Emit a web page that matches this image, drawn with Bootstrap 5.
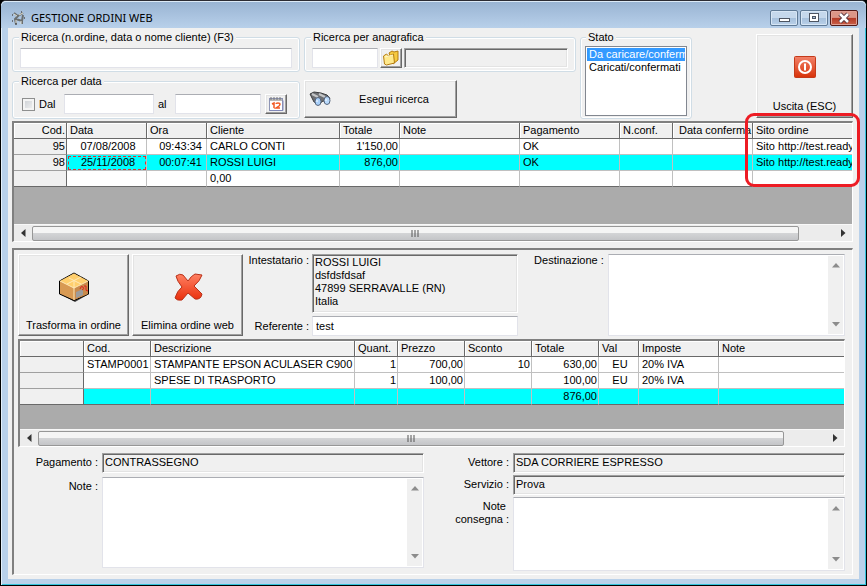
<!DOCTYPE html>
<html lang="it">
<head>
<meta charset="utf-8">
<meta name="viewport" content="width=device-width, initial-scale=1">
<title>GESTIONE ORDINI WEB</title>
<link href="https://cdn.jsdelivr.net/npm/bootstrap@5.3.0/dist/css/bootstrap.min.css" rel="stylesheet">
<style>
:root{--face:#f0f0f0;--dark:#696969;--mid:#a0a0a0}
body{font:11px/13px "Liberation Sans",Arial,sans-serif;color:#000;background:#000}
input,button,select,textarea{font:inherit;color:inherit;border-radius:0}
.app-window{min-height:100vh;background:#b9d1ea;border:1px solid #000;border-top:1px solid #2b2b33;border-radius:6px 6px 0 0;box-shadow:inset 1px 1px #e4f0fa,inset -1px -1px #35c4dc}
.title-bar{height:27px;padding:2px 8px 0 10px;background:linear-gradient(#98b3d2,#b8d0ea);border-radius:5px 5px 0 0;box-shadow:inset 0 1px #dceaf7}
.title-text{font:11px/16px "Noto Sans","Open Sans",sans-serif}
.win-btn{width:28px;height:16px;padding:0;border:1px solid #5f7a96;border-radius:2px;background:linear-gradient(#c5d8ec 48%,#a5bfdb 50%,#bad1e9);box-shadow:inset 0 0 0 1px #d7e6f5;line-height:0}
.win-close{border-color:#541b18;background:linear-gradient(#dc9687 46%,#b43a25 50%,#c9604a);box-shadow:inset 0 0 0 1px #e0a094}
.win-body{background:var(--face);margin:0 7px 6px 7px;padding:3px 6px 4px 4px}
.top-area{gap:4px;margin-bottom:2px}
.search-grid{display:grid;grid-template-columns:289fr 273fr;column-gap:4px;row-gap:3px}
.group{border:1px solid #d0dde6;border-radius:3px;padding:4px 7px 3px;box-shadow:inset 0 0 0 1px #fff;min-width:0}
.group legend{float:none;width:auto;font:inherit;margin:0 0 0 -1px;padding:0 2px;background:var(--face);height:13px}
.group-dates{padding:6px 12px 4px 9px}
.group-dates legend{margin-left:-3px}
.text-in{border:1px solid #e2e3ea;border-top-color:#abadb3;background:#fff;padding:0 3px;height:20px;min-width:0;outline-offset:-1px}
.sunken{border:1px solid;border-color:var(--mid) #fff #fff var(--mid);box-shadow:inset 1px 1px var(--dark),inset -1px -1px #e3e3e3;background:var(--face);padding:0 2px 2px;height:20px;min-width:0;outline:0}
.raised{background:var(--face);border:1px solid;border-color:#fff var(--dark) var(--dark) #fff;box-shadow:inset -1px -1px var(--mid),inset 1px 1px #e3e3e3;padding:0}
.mini{width:22px;height:20px;line-height:0}
.date-check{appearance:none;width:13px;height:13px;border:1px solid #8e8f8f;background:linear-gradient(135deg,#c9cdd2,#f4f4f4);box-shadow:inset 0 0 0 2px #f4f4f4;margin:0}
.run-btn{width:153px;height:38px;margin-top:5px}
.state-box{width:112px;margin-right:60px;padding:2px 4px}
.state-box legend{margin-left:1px}
.state-list{width:102px;height:70px;border:1px solid #828790;background:#fff;padding:1px;overflow:hidden;outline:0;display:block}
.state-list option{padding:0 0 0 2px;min-height:13px;line-height:13px}
.state-list option:checked{background:#39f linear-gradient(#39f,#39f);-webkit-text-fill-color:#fff}
.exit-btn{width:97px;height:84px;margin-top:3px;padding:20px 0 0}
.exit-text{margin-top:21px;line-height:13px}
.data-frame{border:solid;border-width:2px 1px 1px 2px;border-color:#808080 #fff #fff #808080;background:#ababab}
.data-clip{overflow:hidden}
.data-grid{table-layout:fixed;border-collapse:separate;border-spacing:0;margin:0;color:#000}
.data-grid>:not(caption)>*>*{padding:0 0 0 3px;height:16px;line-height:15px;border:solid #c0c0c0;border-width:0 1px 1px 0;white-space:nowrap;overflow:hidden;font-weight:400;box-shadow:none;background:#fff;color:#000;text-align:left}
.data-grid>*>tr>:last-child{border-right-width:0}
.data-grid>thead>tr>th,.data-grid>tbody>tr>th{background:var(--face)}
.data-grid>thead>tr>th{border-right-color:var(--dark);border-bottom-color:var(--dark);box-shadow:inset 1px 1px #fff}
.data-grid>tbody>tr>th{border-right-color:var(--dark);border-bottom-color:var(--mid)}
.data-grid>tbody>tr:last-child>*{border-bottom-color:var(--dark)}
.data-grid>tbody>tr.picked>td{background:#0ff}
.data-grid>*>tr>.num{text-align:right;padding-right:1px}
.data-grid>*>tr>.mid{text-align:center}
.data-grid>*>tr>.focus-cell{outline:1px dashed #e03030;outline-offset:-2px}
.h-scroll{height:17px;background:#ececec;border-top:1px solid #f8f8f8}
.h-arrow{width:18px;line-height:0}
.thumb{height:15px;border:1px solid #979797;border-radius:2px;background:linear-gradient(#f5f5f5 45%,#d3d4d6 50%,#c4c5c8)}
.order-panel{border:solid;border-width:2px 1px 1px 2px;border-color:#808080 #fff #fff #808080;margin-top:6px;padding:4px 7px 3px 4px}
.action-btn{width:111px;height:82px;padding:0}
.action-btn svg{display:block;margin:12px auto 15px}
.memo{border:1px solid #e2e3ea;border-top-color:#abadb3;background:#fff;min-width:0}
.memo textarea{border:0;resize:none;outline:0;padding:2px;width:100%;background:transparent;overflow:hidden;min-height:0}
.v-scroll{width:15px;flex:none;background:#f0f0f0;padding:7px 0;margin:1px;line-height:0}
.addr{height:59px;padding:1px 2px}
.lbl{text-align:right;flex:none;white-space:nowrap;margin-right:4px}
.lbl-head{width:62px;margin-right:3px}
.lbl-foot{width:80px;padding-top:3px}
.callout-ring{position:absolute;top:-10px;right:-8px;width:115px;height:74px;border:3px solid #ed1c24;border-radius:9px;pointer-events:none}
.bottom-fields{gap:5px;margin-top:6px;height:118px}
.foot-left{flex:407 1 0;gap:4px;padding-bottom:3px}
.foot-right{flex:417 1 0;gap:2px}
</style>
<script src="https://cdn.jsdelivr.net/npm/bootstrap@5.3.0/dist/js/bootstrap.bundle.min.js"></script>
</head>
<body>
<div class="app-window d-flex flex-column">
  <header class="title-bar d-flex align-items-center">
    <svg width="16" height="16" viewBox="0 0 16 16" class="me-1 mt-1" fill="none" aria-hidden="true"><path d="M3 3l4 3-3 3 1 5M7 6l5-3M5 9l6 2v3M12 5l-1 6" stroke="#6b6f70" stroke-width="2"/><path d="M3 4l3 2M8 5l4-2M10 11v3M5 10v3" stroke="#e0e0d4"/><path d="M1 5h1M4 14h2M13 8h1M10 2h1M1 11h1" stroke="#555" stroke-width="1.500"/></svg>
    <h1 class="title-text mb-0 mt-1">GESTIONE ORDINI WEB</h1>
    <div class="ms-auto d-flex mt-1" style="gap:2px">
      <button class="win-btn" aria-label="Riduci"><svg width="14" height="12" viewBox="0 0 14 12"><rect x="2.500" y="6.500" width="10" height="3" fill="#fff" stroke="#4d5562"/></svg></button>
      <button class="win-btn" aria-label="Ingrandisci"><svg width="14" height="12" viewBox="0 0 14 12"><rect x="2.500" y="1.500" width="9" height="8" fill="#fff" stroke="#4d5562"/><rect x="5.500" y="4.500" width="3" height="2" fill="#a8c0da" stroke="#4d5562"/></svg></button>
      <button class="win-btn win-close" aria-label="Chiudi"><svg width="14" height="12" viewBox="0 0 14 12"><path d="M3 2l8 8M11 2l-8 8" stroke="#50303a" stroke-width="4.500"/><path d="M3 2l8 8M11 2l-8 8" stroke="#fff" stroke-width="2.500"/></svg></button>
    </div>
  </header>

  <main class="win-body d-flex flex-column flex-grow-1">
    <section class="top-area d-flex align-items-start">
      <div class="search-grid flex-grow-1">
        <fieldset class="group"><legend><label for="q">Ricerca (n.ordine, data o nome cliente) (F3)</label></legend>
          <div class="d-flex"><input id="q" class="text-in w-100" type="text"></div></fieldset>
        <fieldset class="group"><legend><label for="ana">Ricerca per anagrafica</label></legend>
          <div class="d-flex" style="gap:2px">
            <input id="ana" class="text-in" type="text" style="width:66px">
            <button class="raised mini" aria-label="Scegli anagrafica"><svg width="18" height="16" viewBox="0 0 18 16"><path d="M7 3l3-2 2 1 4-1v9l-5 4z" fill="#f6c93f" stroke="#b57d11"/><path d="M1.500 6l3-2 2 2 5-2 1 9-8 2-2-1z" fill="#ffe98c" stroke="#b57d11"/><path d="M3 7l8-2" stroke="#fff6c8"/></svg></button>
            <input class="sunken flex-grow-1" type="text" readonly aria-label="Nome anagrafica">
          </div></fieldset>
        <fieldset class="group group-dates"><legend>Ricerca per data</legend>
          <div class="d-flex align-items-center">
            <input id="dal" class="date-check" type="checkbox"><label for="dal" class="ms-1 me-2">Dal</label>
            <input class="text-in flex-grow-1" style="width:88px" type="text" aria-label="Data iniziale">
            <label for="al" class="ms-1 me-2">al</label>
            <input id="al" class="text-in flex-grow-1" style="width:84px" type="text">
            <button class="raised mini ms-1" aria-label="Calendario"><svg width="16" height="16" viewBox="0 0 16 16"><rect x="1.500" y="2.500" width="13" height="12" fill="#fff" stroke="#8d94b5"/><path d="M2 4h12M3 1v3M6 1v3M9 1v3M12 1v3" stroke="#777"/><path d="M2 14.500h13v-10" stroke="#8188b8" fill="none"/><path d="M4 8l2-1v5M8 8q0-1 2-1t2 1-1 2l-3 2h4" stroke="#f15a24" stroke-width="1.500" fill="none"/></svg></button>
          </div></fieldset>
        <button class="raised run-btn d-flex align-items-center">
          <svg class="ms-1" width="23" height="16" viewBox="0 0 23 16"><path d="M1 3l4-2 7 1 6 2 3 3-2 4-5-1-4 3-5-2z" fill="#6d6f72" stroke="#3c3e40"/><path d="M3 3l6 3M10 3l6 3" stroke="#c4c6c8" stroke-width="2"/><ellipse cx="9" cy="10.500" rx="3" ry="4" fill="#a9d0fa" stroke="#56657c"/><ellipse cx="18" cy="9.500" rx="3" ry="4" fill="#b9dafc" stroke="#56657c"/><path d="M8 9v2M17 8v2" stroke="#fff"/></svg>
          <span class="flex-grow-1">Esegui ricerca</span></button>
      </div>
      <fieldset class="group state-box"><legend><label for="stato">Stato</label></legend>
        <select id="stato" class="state-list" size="5"><option selected>Da caricare/confermare</option><option>Caricati/confermati</option></select></fieldset>
      <button class="raised exit-btn d-flex flex-column align-items-center"><svg width="24" height="24" viewBox="0 0 24 24"><defs><linearGradient id="pw" x2="0" y2="1"><stop stop-color="#f2826a"/><stop offset="1" stop-color="#d83208"/></linearGradient></defs><rect x="1.500" y="1.500" width="21" height="21" rx="1" fill="url(#pw)" stroke="#c43a1a"/><circle cx="12" cy="12" r="6" fill="none" stroke="#fff" stroke-width="2"/><path d="M12 8.500v7" stroke="#fff" stroke-width="2"/></svg><span class="exit-text">Uscita (ESC)</span></button>
    </section>

    <section class="data-frame position-relative">
      <div class="data-clip">
      <table class="table data-grid" aria-label="Ordini">
        <colgroup><col style="width:53px"><col style="width:80px"><col style="width:60px"><col style="width:133px"><col style="width:60px"><col style="width:120px"><col style="width:100px"><col style="width:53px"><col style="width:80px"><col></colgroup>
        <thead><tr><th class="num">Cod.</th><th>Data</th><th>Ora</th><th>Cliente</th><th>Totale</th><th>Note</th><th>Pagamento</th><th>N.conf.</th><th>&nbsp;Data conferma</th><th>Sito ordine</th></tr></thead>
        <tbody>
          <tr><th class="num">95</th><td class="mid">07/08/2008</td><td class="num">09:43:34&nbsp;</td><td>CARLO CONTI</td><td class="num">1'150,00</td><td></td><td>OK</td><td></td><td></td><td>Sito http://test.ready</td></tr>
          <tr class="picked"><th class="num">98</th><td class="mid focus-cell">25/11/2008</td><td class="num">00:07:41&nbsp;</td><td>ROSSI LUIGI</td><td class="num">876,00</td><td></td><td>OK</td><td></td><td></td><td>Sito http://test.ready</td></tr>
          <tr><th></th><td></td><td></td><td>0,00</td><td></td><td></td><td></td><td></td><td></td><td></td></tr>
        </tbody>
      </table></div>
      <div style="height:37px"></div>
      <div class="h-scroll d-flex align-items-center">
        <span class="h-arrow text-center"><svg width="5" height="8"><path d="M4.500 0v8L0 4z" fill="#333"/></svg></span>
        <div class="thumb d-flex justify-content-center align-items-center" style="flex:0 1 91.500%"><svg width="8" height="7"><path d="M1 0v7M4 0v7M7 0v7" stroke="#555"/></svg></div>
        <span class="h-arrow text-center ms-auto"><svg width="5" height="8"><path d="M0 0v8l4.500-4z" fill="#333"/></svg></span>
      </div>
      <div class="callout-ring"></div>
    </section>

    <section class="order-panel flex-grow-1 d-flex flex-column">
      <div class="d-flex align-items-start">
        <button class="raised action-btn"><svg width="34" height="34" viewBox="0 0 34 34"><path d="M3 24l15 8 14-8v-4H3z" fill="#444"/><path d="M2.500 11L17 3l14.500 8v13L17 30.500 2.500 24z" fill="#d89a53" stroke="#000"/><path d="M3 11l14-7.500L31 11l-14 7z" fill="#ffcf6d"/><path d="M17 18v12l14-6V11z" fill="#c98a4b"/><path d="M3 11l14 7 14-7M17 18v12M10 14l14-7M17 10v8M12 8l12 6" stroke="#ffe9b8" fill="none"/><path d="M19 22l7-3v6l-7 3z" fill="#9c9c9c"/><path d="M23 19q1-4 3-2t-1 3M27 16q3-1 2 2t2 3" stroke="#e02020" fill="none"/></svg>Trasforma in ordine</button>
        <button class="raised action-btn" style="margin-left:3px"><svg width="34" height="34" viewBox="0 0 34 34"><defs><linearGradient id="rx" x2="0" y2="1"><stop stop-color="#ff8163"/><stop offset="1" stop-color="#e92f0c"/></linearGradient></defs><path d="M5 6q4-3 7-1l5 6q3-5 7-7l7 1q-2 6-8 11l8 8q-1 6-7 5l-7-6-6 7q-5 1-7-2 2-7 7-11-5-6-6-11z" fill="url(#rx)" stroke="#b8321a"/></svg>Elimina ordine web</button>
        <div class="ms-1 d-flex flex-column" style="gap:3px;flex:272 1 0">
          <div class="d-flex"><span class="lbl lbl-head">Intestatario :</span><div class="sunken addr flex-grow-1">ROSSI LUIGI<br>dsfdsfdsaf<br>47899 SERRAVALLE (RN)<br>Italia</div></div>
          <div class="d-flex align-items-center"><label for="ref" class="lbl lbl-head">Referente :</label><input id="ref" class="text-in flex-grow-1" type="text" value="test" style="width:80px"></div>
        </div>
        <label for="dest" class="lbl ms-3">Destinazione :</label>
        <div class="memo d-flex" style="height:82px;flex:236 1 0"><textarea id="dest"></textarea>
          <div class="v-scroll d-flex flex-column justify-content-between align-items-center"><svg width="8" height="5"><path d="M0 4.500h8L4 0z" fill="#8c8c8c"/></svg><svg width="8" height="5"><path d="M0 0h8L4 4.500z" fill="#8c8c8c"/></svg></div></div>
      </div>

      <div class="data-frame" style="margin-top:3px">
        <div class="data-clip">
        <table class="table data-grid" aria-label="Righe ordine">
          <colgroup><col style="width:64px"><col style="width:67px"><col style="width:204px"><col style="width:43px"><col style="width:67px"><col style="width:67px"><col style="width:67px"><col style="width:40px"><col style="width:80px"><col></colgroup>
          <thead><tr><th></th><th>Cod.</th><th>Descrizione</th><th>Quant.</th><th>Prezzo</th><th>Sconto</th><th>Totale</th><th>Val</th><th>Imposte</th><th>Note</th></tr></thead>
          <tbody>
            <tr><th></th><td>STAMP0001</td><td>STAMPANTE EPSON ACULASER C900</td><td class="num">1</td><td class="num">700,00</td><td class="num">10</td><td class="num">630,00</td><td class="mid">EU</td><td>20% IVA</td><td></td></tr>
            <tr><th></th><td></td><td>SPESE DI TRASPORTO</td><td class="num">1</td><td class="num">100,00</td><td></td><td class="num">100,00</td><td class="mid">EU</td><td>20% IVA</td><td></td></tr>
            <tr class="picked"><th></th><td></td><td></td><td></td><td></td><td></td><td class="num">876,00</td><td></td><td></td><td></td></tr>
          </tbody>
        </table></div>
        <div style="height:24px"></div>
        <div class="h-scroll d-flex align-items-center">
          <span class="h-arrow text-center"><svg width="5" height="8"><path d="M4.500 0v8L0 4z" fill="#333"/></svg></span>
          <div class="thumb d-flex justify-content-center align-items-center" style="flex:0 1 90.500%"><svg width="8" height="7"><path d="M1 0v7M4 0v7M7 0v7" stroke="#555"/></svg></div>
          <span class="h-arrow text-center ms-auto"><svg width="5" height="8"><path d="M0 0v8l4.500-4z" fill="#333"/></svg></span>
        </div>
      </div>

      <div class="bottom-fields d-flex">
        <div class="foot-left d-flex flex-column">
          <div class="d-flex"><label class="lbl lbl-foot" for="pag">Pagamento :</label><input id="pag" class="sunken flex-grow-1" type="text" readonly value="CONTRASSEGNO"></div>
          <div class="d-flex flex-grow-1"><label class="lbl lbl-foot" for="note">Note :</label><div class="memo d-flex flex-grow-1"><textarea id="note"></textarea>
            <div class="v-scroll d-flex flex-column justify-content-between align-items-center"><svg width="8" height="5"><path d="M0 4.500h8L4 0z" fill="#8c8c8c"/></svg><svg width="8" height="5"><path d="M0 0h8L4 4.500z" fill="#8c8c8c"/></svg></div></div></div>
        </div>
        <div class="foot-right d-flex flex-column">
          <div class="d-flex"><label class="lbl lbl-foot" for="vet">Vettore :</label><input id="vet" class="sunken flex-grow-1" type="text" readonly value="SDA CORRIERE ESPRESSO"></div>
          <div class="d-flex"><label class="lbl lbl-foot" for="srv">Servizio :</label><input id="srv" class="sunken flex-grow-1" type="text" readonly value="Prova"></div>
          <div class="d-flex flex-grow-1"><label class="lbl lbl-foot" for="cons">Note&nbsp;<br>consegna :</label><div class="memo d-flex flex-grow-1"><textarea id="cons"></textarea>
            <div class="v-scroll d-flex flex-column justify-content-between align-items-center"><svg width="8" height="5"><path d="M0 4.500h8L4 0z" fill="#8c8c8c"/></svg><svg width="8" height="5"><path d="M0 0h8L4 4.500z" fill="#8c8c8c"/></svg></div></div></div>
        </div>
      </div>
    </section>
  </main>
</div>
</body>
</html>
